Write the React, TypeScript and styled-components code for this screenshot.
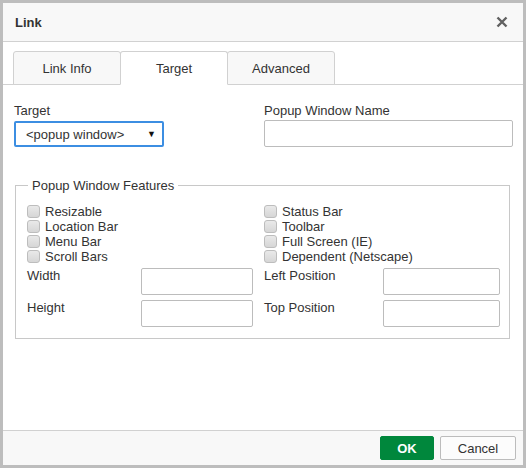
import React, { useState } from 'react';
import styled, { createGlobalStyle, css } from 'styled-components';

const GlobalStyle = createGlobalStyle`
  html, body {
    margin: 0;
    padding: 0;
    background: #fff;
  }
  * {
    box-sizing: border-box;
  }
  body {
    font-family: 'Liberation Sans', Arial, sans-serif;
    font-size: 13px;
    color: #333;
  }
`;

const Dialog = styled.div`
  width: 526px;
  height: 468px;
  border: 3px solid #bdbdbd;
  display: flex;
  flex-direction: column;
  background: #fff;
`;

const TitleBar = styled.div`
  height: 39px;
  flex: none;
  display: flex;
  align-items: center;
  justify-content: space-between;
  padding: 0 14px 0 12px;
  background: #f8f8f8;
  border-bottom: 1px solid #d1d1d1;
`;

const Title = styled.span`
  font-weight: bold;
  font-size: 13px;
  color: #333;
`;

const Close = styled.button`
  border: 0;
  background: none;
  padding: 0;
  width: 14px;
  height: 14px;
  display: flex;
  align-items: center;
  justify-content: center;
  cursor: pointer;
`;

const TabBar = styled.div`
  flex: none;
  display: flex;
  padding: 9px 0 0 10px;
  border-bottom: 1px solid #d1d1d1;
`;

const Tab = styled.button<{ active?: boolean }>`
  width: 108px;
  height: 34px;
  margin-right: -1px;
  margin-bottom: -1px;
  font-family: inherit;
  font-size: 13px;
  color: #333;
  background: #f8f8f8;
  border: 1px solid #d1d1d1;
  border-radius: 3px 3px 0 0;
  cursor: pointer;
  padding: 0;
  ${(p) =>
    p.active &&
    css`
      background: #fff;
      border-bottom-color: #fff;
      position: relative;
      z-index: 1;
    `}
`;

const Body = styled.div`
  flex: 1;
  padding: 18px 10px 0 11px;
`;

const TopRow = styled.div`
  display: grid;
  grid-template-columns: 239px 249px;
  column-gap: 11px;
`;

const Field = styled.div`
  display: flex;
  flex-direction: column;
  align-items: flex-start;
`;

const Label = styled.label`
  line-height: 15px;
  font-size: 13px;
  color: #333;
`;

const Select = styled.div`
  margin-top: 3px;
  width: 150px;
  height: 26px;
  border: 2px solid #3c8ee2;
  border-radius: 2px;
  display: flex;
  align-items: center;
  justify-content: space-between;
  padding: 0 6px 0 10px;
  font-size: 13px;
  color: #333;
`;

const Arrow = styled.span`
  font-size: 9px;
  color: #111;
`;

const TextInput = styled.input`
  width: 100%;
  height: 27px;
  border: 1px solid #bcbcbc;
  border-radius: 2px;
  padding: 0 6px;
  font-family: inherit;
  font-size: 13px;
  background: #fff;
  outline: none;
`;

const NameInput = styled(TextInput)`
  margin-top: 2px;
`;

const Fieldset = styled.fieldset`
  margin: 31px 0 0 1px;
  width: 495px;
  border: 1px solid #c8c8c8;
  padding: 11px 9px 11px 11px;
`;

const Legend = styled.legend`
  margin-left: 1px;
  padding: 0 4px;
  font-size: 13px;
  line-height: 15px;
  color: #333;
`;

const Columns = styled.div`
  display: grid;
  grid-template-columns: 226px 236px;
  column-gap: 11px;
`;

const Column = styled.div`
  display: flex;
  flex-direction: column;
`;

const CheckList = styled.div`
  display: flex;
  flex-direction: column;
  margin-bottom: 4px;
`;

const CheckRow = styled.label`
  display: flex;
  align-items: center;
  gap: 5px;
  height: 15px;
  line-height: 15px;
  cursor: pointer;
`;

const Box = styled.span`
  width: 13px;
  height: 13px;
  flex: none;
  border: 1px solid #bdbdbd;
  border-radius: 3px;
  background: linear-gradient(#e9e9e9, #d6d6d6);
  display: flex;
  align-items: center;
  justify-content: center;
  font-size: 10px;
  color: #333;
`;

const InputRow = styled.div<{ inputWidth: number }>`
  display: grid;
  grid-template-columns: 1fr ${(p) => p.inputWidth}px;
  align-items: start;
  & + & {
    margin-top: 5px;
  }
`;

const InputLabel = styled.label`
  line-height: 15px;
  color: #333;
`;

const Footer = styled.div`
  flex: none;
  height: 35px;
  display: flex;
  align-items: center;
  justify-content: flex-end;
  gap: 6px;
  padding-right: 7px;
  background: #f8f8f8;
  border-top: 1px solid #d1d1d1;
`;

const Button = styled.button<{ primary?: boolean }>`
  height: 24px;
  font-family: inherit;
  font-size: 13px;
  border-radius: 2px;
  cursor: pointer;
  padding: 0;
  ${(p) =>
    p.primary
      ? css`
          width: 54px;
          background: #00873c;
          border: 1px solid #00873c;
          color: #fff;
          font-weight: bold;
        `
      : css`
          width: 76px;
          background: #fcfcfc;
          border: 1px solid #bcbcbc;
          color: #333;
        `}
`;

const leftChecks = ['Resizable', 'Location Bar', 'Menu Bar', 'Scroll Bars'];
const rightChecks = ['Status Bar', 'Toolbar', 'Full Screen (IE)', 'Dependent (Netscape)'];

function Check({ label }: { label: string }) {
  const [on, setOn] = useState(false);
  return (
    <CheckRow onClick={() => setOn(!on)}>
      <Box>{on ? '✓' : ''}</Box>
      {label}
    </CheckRow>
  );
}

export default function App() {
  const [tab, setTab] = useState('Target');
  const tabs = ['Link Info', 'Target', 'Advanced'];

  return (
    <>
      <GlobalStyle />
      <Dialog>
        <TitleBar>
          <Title>Link</Title>
          <Close aria-label="Close">
            <svg width="12" height="12" viewBox="0 0 12 12">
              <path d="M1.5 1.5 L10.5 10.5 M10.5 1.5 L1.5 10.5" stroke="#616161" strokeWidth="2.4" />
            </svg>
          </Close>
        </TitleBar>
        <TabBar>
          {tabs.map((t) => (
            <Tab key={t} active={t === tab} onClick={() => setTab(t)}>
              {t}
            </Tab>
          ))}
        </TabBar>
        <Body>
          <TopRow>
            <Field>
              <Label>Target</Label>
              <Select>
                <span>&lt;popup window&gt;</span>
                <Arrow>▼</Arrow>
              </Select>
            </Field>
            <Field>
              <Label>Popup Window Name</Label>
              <NameInput />
            </Field>
          </TopRow>
          <Fieldset>
            <Legend>Popup Window Features</Legend>
            <Columns>
              <Column>
                <CheckList>
                  {leftChecks.map((c) => (
                    <Check key={c} label={c} />
                  ))}
                </CheckList>
                <InputRow inputWidth={112}>
                  <InputLabel>Width</InputLabel>
                  <TextInput />
                </InputRow>
                <InputRow inputWidth={112}>
                  <InputLabel>Height</InputLabel>
                  <TextInput />
                </InputRow>
              </Column>
              <Column>
                <CheckList>
                  {rightChecks.map((c) => (
                    <Check key={c} label={c} />
                  ))}
                </CheckList>
                <InputRow inputWidth={117}>
                  <InputLabel>Left Position</InputLabel>
                  <TextInput />
                </InputRow>
                <InputRow inputWidth={117}>
                  <InputLabel>Top Position</InputLabel>
                  <TextInput />
                </InputRow>
              </Column>
            </Columns>
          </Fieldset>
        </Body>
        <Footer>
          <Button primary>OK</Button>
          <Button>Cancel</Button>
        </Footer>
      </Dialog>
    </>
  );
}
